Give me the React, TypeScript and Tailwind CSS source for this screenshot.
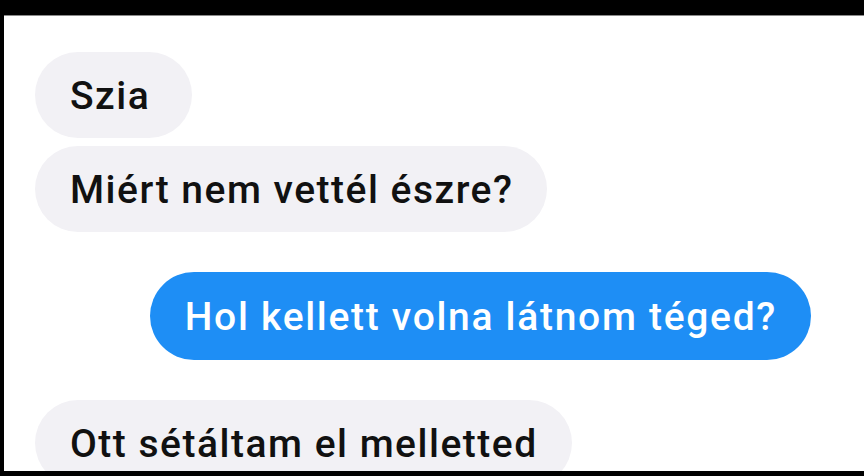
import React from "react";

type Msg = { id: number; text: string; mine?: boolean; gap: string; extra?: string };

const messages: Msg[] = [
    { id: 1, text: "Szia", gap: "mt-[36px]", extra: "min-w-[157px]" },
    { id: 2, text: "Miért nem vettél észre?", gap: "mt-[8px]" },
    { id: 3, text: "Hol kellett volna látnom téged?", mine: true, gap: "mt-[40px]" },
    { id: 4, text: "Ott sétáltam el melletted", gap: "mt-[40px]" },
];

export default function App() {
    return (
        <div className="w-[864px] h-[476px] bg-black flex flex-col pt-[15px] pl-[4px] pb-[5px] overflow-hidden">
            <div className="flex-1 bg-white border-t border-[#8a8a8a] overflow-hidden flex flex-col" style={{ fontFamily: "Roboto, 'Noto Sans', sans-serif" }}>
                {messages.map((m) =>
                    m.mine ? (
                        <div key={m.id} className={`${m.gap} flex justify-end pr-[53px] shrink-0`}>
                            <div className="h-[88px] pl-[35px] pr-[34px] pt-[2px] flex items-center rounded-[44px] bg-[#1e8ef5] text-white text-[39px] font-medium tracking-[1.7px]">
                                {m.text}
                            </div>
                        </div>
                    ) : (
                        <div key={m.id} className={`${m.gap} flex pl-[31px] shrink-0`}>
                            <div className={`${m.extra ?? ""} h-[86px] pl-[35px] pr-[34px] pt-[2px] flex items-center rounded-[43px] bg-[#f2f1f5] text-[#111] text-[39px] font-medium tracking-[1.5px]`}>
                                {m.text}
                            </div>
                        </div>
                    )
                )}
            </div>
        </div>
    );
}
